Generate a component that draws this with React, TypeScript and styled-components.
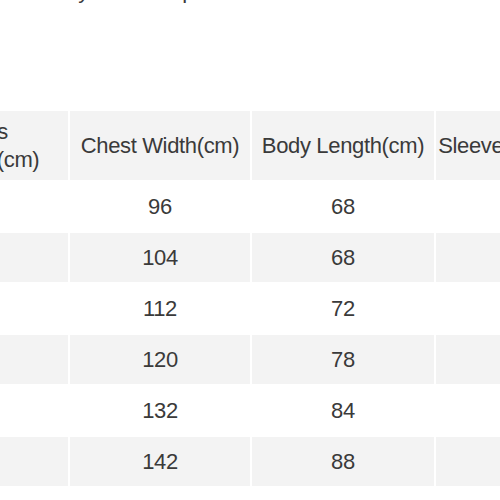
import styled, { createGlobalStyle } from 'styled-components';

const GlobalStyle = createGlobalStyle`
  html, body {
    margin: 0;
    padding: 0;
    background: #fff;
  }
  body {
    font-family: 'Liberation Sans', Arial, sans-serif;
    color: #3a3a3a;
  }
`;

const Page = styled.div`
  width: 500px;
  height: 500px;
  overflow: hidden;
  background: #fff;
`;

const Note = styled.p`
  margin: -23px 0 0 -17px;
  font-size: 22px;
  line-height: 28px;
  letter-spacing: -0.35px;
  white-space: nowrap;
`;

const Table = styled.table`
  width: 727px;
  margin: 104px 0 0 -106px;
  border-collapse: separate;
  border-spacing: 2px;
  table-layout: fixed;
  font-size: 22px;
  letter-spacing: -0.35px;
`;

const HeadCell = styled.th`
  height: 69px;
  padding: 0;
  background: #f3f3f3;
  font-weight: normal;
  line-height: 28px;
  text-align: center;
  white-space: nowrap;
`;

const Row = styled.tr<{ $shaded: boolean }>`
  background: ${(p) => (p.$shaded ? '#f3f3f3' : '#fff')};
`;

const Cell = styled.td`
  height: 49px;
  padding: 0;
  line-height: 24px;
  text-align: center;
  white-space: nowrap;
`;

const Col = styled.col<{ $w: number }>`
  width: ${(p) => p.$w}px;
`;

const rows = [
  { size: '110', chest: 96, body: 68, sleeve: 20 },
  { size: '120', chest: 104, body: 68, sleeve: 21 },
  { size: '130', chest: 112, body: 72, sleeve: 22 },
  { size: '140', chest: 120, body: 78, sleeve: 23 },
  { size: '150', chest: 132, body: 84, sleeve: 24 },
  { size: '160', chest: 142, body: 88, sleeve: 25 },
];

export default function App() {
  return (
    <Page>
      <GlobalStyle />
      <Note>Note: all by manual up to 1-3cm error</Note>
      <Table>
        <colgroup>
          <Col $w={172} />
          <Col $w={180} />
          <Col $w={182} />
          <Col $w={183} />
        </colgroup>
        <thead>
          <tr>
            <HeadCell>
              Sizes
              <br />
              Heights(cm)
            </HeadCell>
            <HeadCell>Chest Width(cm)</HeadCell>
            <HeadCell>Body Length(cm)</HeadCell>
            <HeadCell>Sleeve Length(cm)</HeadCell>
          </tr>
        </thead>
        <tbody>
          {rows.map((r, i) => (
            <Row key={r.size} $shaded={i % 2 === 1}>
              <Cell>{r.size}</Cell>
              <Cell>{r.chest}</Cell>
              <Cell>{r.body}</Cell>
              <Cell>{r.sleeve}</Cell>
            </Row>
          ))}
        </tbody>
      </Table>
    </Page>
  );
}
